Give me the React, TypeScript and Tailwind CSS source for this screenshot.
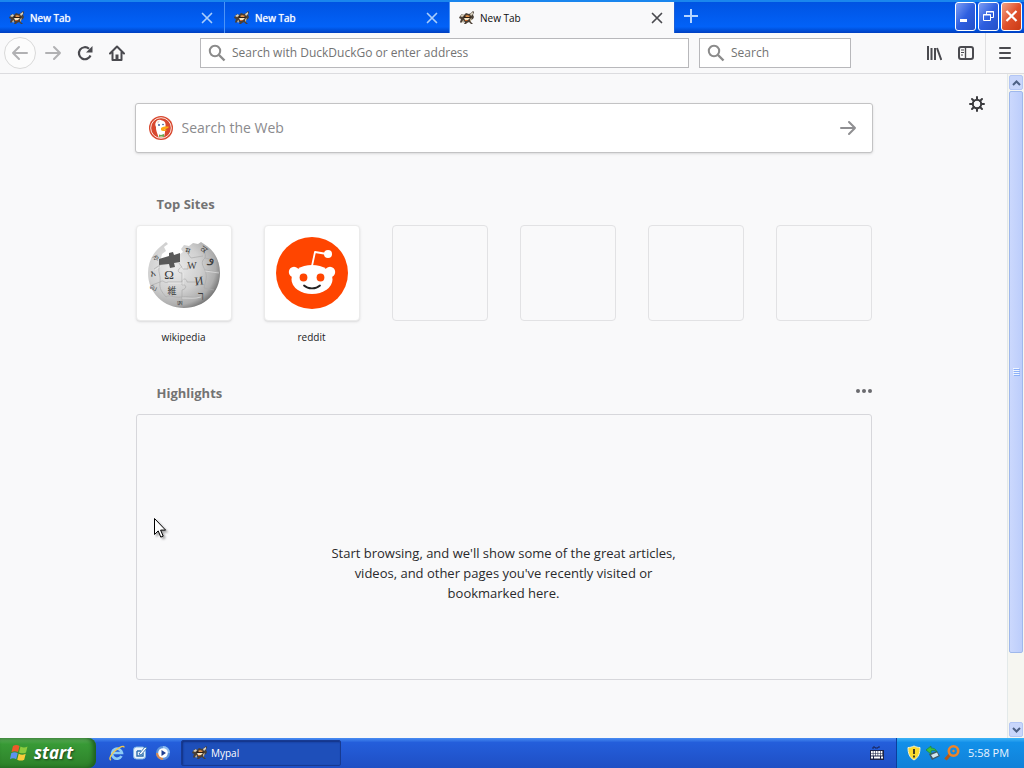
import { useState } from 'react';
import type { ReactNode } from 'react';

const MypalIcon = () => (
    <svg width="16" height="16" viewBox="0 0 16 16" className="shrink-0" aria-hidden="true">
        <path d="M1 6l2-2 2 1 2-2 3 1 2-1 2-2 1 1-1 3 1 2-1 2-2 1 0 2 2 2h-2l-2-2-2 1-1 1-2 0 1-2-2-1-2 2-1-1 1-3-2-1z" fill="#4a3f35" />
        <path d="M1 6l3-2 1 2-2 1zM11 4l3-2 0 2-2 2z" fill="#d9d2c0" />
        <path d="M11 9l2-1-1 3-1 1zM3 11l2-1 0 2-1 1z" fill="#b9ad94" />
        <path d="M4 7l4-2 4 2-2 2-4 0z" fill="#2a1c12" />
        <path d="M6 6l2-1 3 1-1 1-3 0z" fill="#e0914c" />
        <path d="M5 8h6l-2 2H6z" fill="#f5e7c8" />
        <path d="M6 10h3l-1 1H6z" fill="#c9682c" />
    </svg>
);

const CloseIcon = () => (
    <svg width="12" height="12" viewBox="0 0 12 12" fill="none" stroke="currentColor" strokeWidth="1.7" strokeLinecap="round" aria-hidden="true">
        <path d="M1.500 1.500l9 9M10.500 1.500l-9 9" />
    </svg>
);

const SearchIcon = () => (
    <svg width="18" height="18" viewBox="0 0 18 18" fill="none" stroke="#8b8b8b" className="shrink-0" aria-hidden="true">
        <circle cx="7" cy="7" r="5.2" strokeWidth="2" />
        <path d="M11 11l5.5 5.5" strokeWidth="2.4" />
    </svg>
);

const ArrowIcon = ({ flip = false }: { flip?: boolean }) => (
    <svg width="18" height="18" viewBox="0 0 18 18" fill="none" stroke="currentColor" strokeWidth="2" strokeLinecap="round" strokeLinejoin="round" className={flip ? 'rotate-180' : ''} aria-hidden="true">
        <path d="M2 9h14M10 3l6 6-6 6" />
    </svg>
);

const DuckIcon = () => (
    <svg width="24" height="24" viewBox="0 0 24 24" aria-hidden="true">
        <circle cx="12" cy="12" r="12" fill="#d8482f" />
        <circle cx="12" cy="12" r="10.3" fill="none" stroke="#fbe3dc" strokeWidth="1" />
        <path d="M7 6c1-2 4-3 6-1.500 3 .5 4 3 3.500 6l-.5 6-1 4.500c-2 .8-4 .6-5.500 0C8 17 6.500 13 7 11c-1-1.500-1-3.500 0-5z" fill="#fff" />
        <path d="M8 6c1-1 2-1.500 3-1.500L9 8z" fill="#e9dccf" />
        <circle cx="10" cy="9" r=".9" fill="#2d4f8e" />
        <circle cx="14" cy="8.500" r=".8" fill="#2d4f8e" />
        <path d="M12 12c2-1.500 5-1.500 8-1.300-.5 1.500-3 2.300-5 2.600l3 .6c-1.500 1.400-5 1.200-6 0z" fill="#fda913" />
        <path d="M10 18.500l2 .5 3-1v3l-3-.5-2 .5z" fill="#6aa84c" />
    </svg>
);

const WikipediaLogo = () => (
    <svg width="72" height="72" viewBox="0 0 72 72" aria-hidden="true">
        <defs>
            <radialGradient id="globe" cx="36%" cy="38%" r="68%">
                <stop offset="0" stopColor="#ececec" />
                <stop offset="0.55" stopColor="#d0d0d0" />
                <stop offset="0.85" stopColor="#adadad" />
                <stop offset="1" stopColor="#757575" />
            </radialGradient>
        </defs>
        <path d="M18 5l-6 5C4 17 0 26 0 36c0 20 16 35 36 35s36-15 36-35c0-13-6-23-16-29l-3-2-3 2-5-1-4 3-5-1-3 4 2 3-4 3-1 5-18 2 2-8 4-3-2-4 4-3z" fill="url(#globe)" />
        <path d="M11 22l10-3 0-3 4-1 1 3 6-2 0 9-6 1 1 4-5 1-1-4-10 1z" fill="#5a5a5a" />
        <path d="M12 28l-6 4M31 26l4 6h5v-4M12 45c4-3 4 2 8 0h14c0-4 5-4 5 0h12M34 30c-5 2-5 6 0 6v12c5-1 5 4 0 5v15M56 8c-3 6 3 7 1 13l13 3M57 21c-5 4-2 8 0 12l14 2M57 33c3 8 0 12-1 18l10 2M12 28c-3 6 1 10 0 17s2 10 6 15M18 60c4-3 6 1 16 0s12 2 20-1M38 14l5 7 12-2M4 48l8-3" fill="none" stroke="#aaa" strokeWidth="0.7" />
        <path d="M13 29l-6 4M32 31h4M20 46h14M35 36v12M57 34l14 2M34 61c8 0 12 1 19-1" fill="none" stroke="#f4f4f4" strokeWidth="0.5" />
        <g fill="#3a3a3a" textAnchor="middle" className="font-['Liberation_Serif',serif]">
            <text x="21" y="42" fontSize="13">Ω</text>
            <text x="44" y="32" fontSize="10">W</text>
            <text x="51" y="48" fontSize="12" transform="rotate(-8 51 44)">И</text>
            <text x="24" y="57" fontSize="9" className="font-['Noto_Sans_CJK_JP',sans-serif]">維</text>
            <text x="53" y="63" fontSize="12">ר</text>
            <text x="64" y="26" fontSize="13" transform="rotate(12 64 22)">و</text>
            <text x="57" y="15" fontSize="9" transform="rotate(35 57 11)">ਕ</text>
            <text x="40" y="16" fontSize="8" transform="rotate(10 40 13)">म</text>
            <text x="5" y="39" fontSize="9" transform="rotate(-15 5 36)">እ</text>
            <text x="6" y="53" fontSize="8" transform="rotate(25 6 50)">வ</text>
            <text x="8" y="24" fontSize="8" transform="rotate(-30 8 20)">ক</text>
            <text x="32" y="69" fontSize="7">ཨ</text>
        </g>
    </svg>
);

const RedditLogo = () => (
    <svg width="72" height="72" viewBox="0 0 72 72" aria-hidden="true">
        <circle cx="36" cy="36" r="36" fill="#ff4500" />
        <path d="M36 29l3-14 12 2" fill="none" stroke="#fff" strokeWidth="1.8" strokeLinejoin="round" />
        <circle cx="52" cy="17" r="4" fill="#fff" />
        <circle cx="18" cy="35" r="5.2" fill="#fff" />
        <circle cx="54" cy="35" r="5.2" fill="#fff" />
        <ellipse cx="36" cy="42.5" rx="20.5" ry="14.5" fill="#fff" />
        <circle cx="27.5" cy="40.5" r="3.9" fill="#ff4500" />
        <circle cx="44.5" cy="40.5" r="3.9" fill="#ff4500" />
        <path d="M28 48.500c4 3.800 12 3.800 16 0" fill="none" stroke="#222" strokeWidth="1.8" strokeLinecap="round" />
    </svg>
);

const Tab = ({ active, onSelect, onClose }: { active: boolean; onSelect: () => void; onClose: () => void }) => (
    <div
        className={`flex w-[225px] items-center pl-[9px] pr-[11px] border-r ${
            active ? 'bg-[#f9f9fa] text-[#0c0c0d] border-[#1a5fd8]' : 'text-white border-[#4d94f7]'
        }`}
    >
        <button onClick={onSelect} className="flex flex-1 items-center gap-[5px] text-left text-[10px] leading-4">
            <MypalIcon />
            <span className={active ? '' : 'text-shadow-[0_0_1px_#ffffff]'}>New Tab</span>
        </button>
        <button onClick={onClose} aria-label="Close tab" className={active ? 'text-[#4a4a4f]' : 'text-[#a9cdfb]'}>
            <CloseIcon />
        </button>
    </div>
);

const ToolButton = ({ label, round = false, faded = false, children }: { label: string; round?: boolean; faded?: boolean; children: ReactNode }) => (
    <button
        aria-label={label}
        className={`flex size-8 shrink-0 items-center justify-center ${round ? 'rounded-full border border-[#d9d9d9] bg-[#fcfcfc]' : ''} ${faded ? 'text-[#b1b1b3]' : 'text-[#4a4a4f]'}`}
    >
        {children}
    </button>
);

const sites = [
    { name: 'wikipedia', logo: <WikipediaLogo /> },
    { name: 'reddit', logo: <RedditLogo /> },
];

const App = () => {
    const [tabs, setTabs] = useState([1, 2, 3]);
    const [current, setCurrent] = useState(3);

    const addTab = () => {
        const id = Math.max(0, ...tabs) + 1;
        setTabs([...tabs, id]);
        setCurrent(id);
    };

    return (
        <div className="flex h-screen flex-col overflow-hidden bg-[#f9f9fa] font-['Open_Sans','Noto_Sans',sans-serif]">
            {/* Title bar and tabs */}
            <header className="flex h-[33px] shrink-0 border-t-2 border-[#1a86ee] bg-linear-to-b from-[#0053e2] via-[#0262f8] via-80% to-[#003fc0]">
                {tabs.map((id) => (
                    <Tab
                        key={id}
                        active={id === current}
                        onSelect={() => setCurrent(id)}
                        onClose={() => setTabs(tabs.filter((t) => t !== id))}
                    />
                ))}
                <button onClick={addTab} aria-label="New tab" className="flex w-8 items-center justify-center pb-1 text-[#b5d4ff]">
                    <svg width="14" height="14" viewBox="0 0 14 14" stroke="currentColor" strokeWidth="2" aria-hidden="true">
                        <path d="M7 0v14M0 7h14" />
                    </svg>
                </button>
                <div className="ml-auto flex gap-[2px] pb-[2px] pr-[2px]">
                    <button aria-label="Minimize" className="w-[21px] rounded-[3px] border border-white bg-linear-to-br from-[#7d9cf3] via-[#2e5fe0] to-[#2450c8]">
                        <svg width="19" height="26" viewBox="0 0 19 26" aria-hidden="true">
                            <path d="M4 15h7v3H4z" fill="#fff" />
                        </svg>
                    </button>
                    <button aria-label="Restore" className="w-[21px] rounded-[3px] border border-white bg-linear-to-br from-[#7d9cf3] via-[#2e5fe0] to-[#2450c8]">
                        <svg width="19" height="26" viewBox="0 0 19 26" fill="none" stroke="#fff" aria-hidden="true">
                            <path d="M7.500 11V7.500h7v6H12M7 8h8M4.500 10.500h7v6h-7zM4 11h8" />
                        </svg>
                    </button>
                    <button aria-label="Close" className="w-[21px] rounded-[3px] border border-white bg-linear-to-br from-[#f0a184] via-[#e0512c] to-[#c93a14]">
                        <svg width="19" height="26" viewBox="0 0 19 26" stroke="#fff" strokeWidth="2.2" aria-hidden="true">
                            <path d="M4.500 7l10 10M14.500 7l-10 10" />
                        </svg>
                    </button>
                </div>
            </header>

            {/* Navigation toolbar */}
            <nav className="flex h-[41px] shrink-0 items-center border-b border-[#dcdcdf] pl-1 pr-[3px]">
                <ToolButton label="Back" round faded>
                    <ArrowIcon flip />
                </ToolButton>
                <div className="ml-px flex">
                    <ToolButton label="Forward" faded>
                        <ArrowIcon />
                    </ToolButton>
                    <ToolButton label="Reload">
                        <svg width="16" height="16" viewBox="0 0 16 16" fill="none" stroke="currentColor" strokeWidth="2.2" aria-hidden="true">
                            <path d="M13.500 10.500A6 6 0 1 1 12 3.800" />
                            <path d="M15.500 1v6.500H9z" fill="currentColor" stroke="none" />
                        </svg>
                    </ToolButton>
                    <ToolButton label="Home">
                        <svg width="16" height="16" viewBox="0 0 16 16" fill="none" stroke="currentColor" strokeWidth="2" strokeLinecap="round" strokeLinejoin="round" aria-hidden="true">
                            <path d="M1 8.500l7-7 7 7M3.500 7.500V15h9V7.500" />
                            <path d="M6.500 9.500h3V15h-3z" fill="currentColor" stroke="none" />
                        </svg>
                    </ToolButton>
                </div>
                <label className="ml-[67px] flex h-[30px] flex-1 items-center gap-[6px] border border-[#b8b8bb] bg-white pl-[7px]">
                    <SearchIcon />
                    <input aria-label="Address" placeholder="Search with DuckDuckGo or enter address" className="min-w-0 flex-1 text-xs outline-none placeholder:text-[#737373]" />
                </label>
                <label className="ml-[10px] mr-[67px] flex h-[30px] w-[152px] items-center gap-[6px] border border-[#b8b8bb] bg-white pl-[7px]">
                    <SearchIcon />
                    <input aria-label="Search" placeholder="Search" className="min-w-0 flex-1 text-xs outline-none placeholder:text-[#737373]" />
                </label>
                <ToolButton label="Library">
                    <svg width="16" height="16" viewBox="0 0 16 16" fill="none" stroke="currentColor" strokeWidth="2" aria-hidden="true">
                        <path d="M2 1v14M5.500 3v12M9 3v12M11 3l4.300 12" />
                    </svg>
                </ToolButton>
                <ToolButton label="Sidebars">
                    <svg width="16" height="16" viewBox="0 0 16 16" fill="none" stroke="currentColor" aria-hidden="true">
                        <rect x="1" y="2" width="14" height="12" rx="2" strokeWidth="2" />
                        <path d="M7.500 2v12" strokeWidth="1.4" />
                        <path d="M3 5h3M3 7.500h3M3 10h2" strokeWidth="1" />
                    </svg>
                </ToolButton>
                <div className="ml-[3px] mr-[3px] h-full w-px bg-[#e0e0e2]" />
                <ToolButton label="Menu">
                    <svg width="12" height="12" viewBox="0 0 12 12" stroke="currentColor" strokeWidth="2" strokeLinecap="round" aria-hidden="true">
                        <path d="M1 1h10M1 6h10M1 11h10" />
                    </svg>
                </ToolButton>
            </nav>

            <div className="flex min-h-0 flex-1">
                {/* New tab page */}
                <main className="relative flex-1 overflow-hidden px-8 pt-[29px]">
                    <button aria-label="Customize" className="absolute right-[22px] top-[22px] text-[#3b3b3e]">
                        <svg width="16" height="16" viewBox="0 0 16 16" fill="none" stroke="currentColor" strokeWidth="2" strokeLinecap="round" aria-hidden="true">
                            <circle cx="8" cy="8" r="4.2" />
                            <path d="M8 1v2.500M8 12.500V15M1 8h2.500M12.500 8H15M3 3l2 2M11 11l2 2M3 13l2-2M11 5l2-2" />
                        </svg>
                    </button>
                    <div className="mx-auto max-w-[736px]">
                        <form onSubmit={(e) => e.preventDefault()} className="-mx-px flex h-[50px] items-center rounded-[3px] border border-[#c3c3c4] bg-white pl-[13px] pr-[15px] shadow-sm">
                            <DuckIcon />
                            <input aria-label="Search the Web" placeholder="Search the Web" className="ml-[9px] min-w-0 flex-1 text-sm outline-none placeholder:text-[#8a8a8d]" />
                            <button aria-label="Search" className="text-[#8f8f92]">
                                <ArrowIcon />
                            </button>
                        </form>

                        <section>
                            <h2 className="mt-[41px] pl-[21px] text-[13px] font-bold leading-5 text-[#737373]">Top Sites</h2>
                            <ul className="mt-[11px] grid grid-cols-6 gap-8 text-[#1c1c1e]">
                                {sites.map((site) => (
                                    <li key={site.name}>
                                        <a href="#" className="block text-center text-[10px] leading-4">
                                            <span className="flex aspect-square items-center justify-center rounded-[4px] border border-[#ebebeb] bg-white shadow-sm">
                                                {site.logo}
                                            </span>
                                            <span className="mt-2 block">{site.name}</span>
                                        </a>
                                    </li>
                                ))}
                                {[3, 4, 5, 6].map((n) => (
                                    <li key={n} className="aspect-square self-start rounded-[4px] border border-[#e2e2e4]" />
                                ))}
                            </ul>
                        </section>

                        <section>
                            <div className="mt-[38px] flex items-center justify-between pl-[21px]">
                                <h2 className="text-[13px] font-bold leading-5 text-[#737373]">Highlights</h2>
                                <button aria-label="Section options" className="pb-1">
                                    <svg width="16" height="4" viewBox="0 0 16 4" fill="#6b6b6e" aria-hidden="true">
                                        <circle cx="2" cy="2" r="2" />
                                        <circle cx="8" cy="2" r="2" />
                                        <circle cx="14" cy="2" r="2" />
                                    </svg>
                                </button>
                            </div>
                            <div className="mt-[11px] min-h-[266px] rounded-[3px] border border-[#d7d7db] pt-32">
                                <p className="mx-auto max-w-[350px] text-center text-[13px] leading-5 text-[#2a2a2c]">
                                    Start browsing, and we'll show some of the great articles, videos, and other pages you've recently visited or bookmarked here.
                                </p>
                            </div>
                        </section>
                    </div>
                    {/* Mouse pointer */}
                    <svg width="16" height="24" viewBox="0 0 16 24" className="absolute left-[153px] top-[443px] drop-shadow-[2px_2px_1px_#00000055]" aria-hidden="true">
                        <path d="M1.500 1.500v16l3.700-3.600 2.600 6.200 2.400-1-2.600-6h5z" fill="#fff" stroke="#000" />
                    </svg>
                </main>

                {/* Scrollbar */}
                <div className="flex w-[17px] flex-col border-l border-[#e3e9e9] bg-[#f6f6f1]">
                    <button aria-label="Scroll up" className="m-px flex h-[15px] items-center justify-center rounded-[2px] border border-[#b3c6f4] bg-[#c8d6fb]">
                        <svg width="9" height="6" viewBox="0 0 9 6" fill="none" stroke="#4d6185" strokeWidth="2" aria-hidden="true">
                            <path d="M1 5l3.500-3.500L8 5" />
                        </svg>
                    </button>
                    <div className="mx-px flex flex-[560] items-center justify-center rounded-[2px] border border-[#9fb8ec] bg-linear-to-r from-[#cbd8fd] to-[#bccdfb]">
                        <svg width="7" height="8" viewBox="0 0 7 8" stroke="#eef4fe" aria-hidden="true">
                            <path d="M0 .5h6M0 2.500h6M0 4.500h6M0 6.500h6" />
                            <path d="M1 1.500h6M1 3.500h6M1 5.500h6M1 7.500h6" stroke="#8cb0f8" />
                        </svg>
                    </div>
                    <div className="flex-[68]" />
                    <button aria-label="Scroll down" className="m-px flex h-[15px] items-center justify-center rounded-[2px] border border-[#b3c6f4] bg-[#c8d6fb]">
                        <svg width="9" height="6" viewBox="0 0 9 6" fill="none" stroke="#4d6185" strokeWidth="2" aria-hidden="true">
                            <path d="M1 1l3.500 3.500L8 1" />
                        </svg>
                    </button>
                </div>
            </div>

            {/* Taskbar */}
            <footer className="flex h-[30px] shrink-0 bg-linear-to-b from-[#4a8df2] via-[#245edb] via-15% to-[#1f4fc4] text-[10px] text-white">
                <button className="flex w-24 items-center gap-1 rounded-r-[8px] bg-linear-to-b from-[#5fae5c] via-[#389a36] via-20% to-[#2d8029] pl-[10px] text-[17px] font-bold italic leading-6 shadow-[inset_-3px_0_4px_#1e5e1e] text-shadow-[1px_1px_2px_#1c401c]">
                    <svg width="20" height="20" viewBox="0 0 20 20" aria-hidden="true">
                        <path d="M3 3c2.500-1.500 4.500-1 6.500 0L8 9c-2-1-4-1.300-6.500 0z" fill="#ee5a2a" />
                        <path d="M10.500 3.500c2.500 1.300 4.500 1.300 7 0L16 9.500c-2.500 1.300-4.500 1-7 0z" fill="#8ccb3e" />
                        <path d="M1.200 10.200c2.500-1.300 4.500-1 6.500 0l-1.500 6c-2-1-4-1.300-6.200 0z" fill="#5c92f0" />
                        <path d="M8.700 10.700c2.500 1.300 4.500 1.300 7 0l-1.500 6c-2.500 1.300-4.500 1-7 0z" fill="#fbcb3b" />
                    </svg>
                    start
                </button>
                <div className="flex items-center gap-[7px] pl-[13px]">
                    <button aria-label="Internet Explorer">
                        <svg width="16" height="16" viewBox="0 0 16 16" fill="none" aria-hidden="true">
                            <path d="M12.500 11A5 5 0 1 1 13 8H4" stroke="#8ccbf7" strokeWidth="2.6" />
                            <path d="M2 15c-3-1 1-7 5-10s8-5 8-2.500" stroke="#f1c84b" strokeWidth="1.4" />
                        </svg>
                    </button>
                    <button aria-label="Show desktop">
                        <svg width="16" height="16" viewBox="0 0 16 16" fill="none" aria-hidden="true">
                            <rect x="1.500" y="2" width="12" height="12" rx="3" fill="#e9f3fb" stroke="#7fb5e6" />
                            <path d="M5 6h4M5 6v5h6V8" stroke="#2d6fae" strokeWidth="1.4" />
                            <path d="M7 9l6-7 2 1-6 7z" fill="#fff" stroke="#3c78b4" />
                        </svg>
                    </button>
                    <button aria-label="Media player">
                        <svg width="16" height="16" viewBox="0 0 16 16" aria-hidden="true">
                            <circle cx="8" cy="8" r="7" fill="#5f95dc" />
                            <path d="M8 1a7 7 0 0 1 7 7H8z" fill="#90bdf0" />
                            <path d="M8 15a7 7 0 0 1-7-7h7z" fill="#d58a52" />
                            <circle cx="8" cy="8" r="4.8" fill="#fff" />
                            <path d="M6.500 5l4.500 3-4.500 3z" fill="#1d3e93" />
                        </svg>
                    </button>
                </div>
                <button className="my-[2px] ml-[10px] flex w-40 items-center gap-[3px] rounded-[2px] border border-[#173a91] bg-[#1e4fba] pl-[10px] shadow-[inset_1px_1px_2px_#123080]">
                    <MypalIcon />
                    Mypal
                </button>
                <button aria-label="Keyboard" className="ml-auto mr-[12px]">
                    <svg width="14" height="14" viewBox="0 0 14 14" aria-hidden="true">
                        <path d="M3 3V1h2v1h3V1h2" fill="none" stroke="#1a2557" />
                        <path d="M0 4h14v10H0z" fill="#1b2348" />
                        <path d="M1 6h12M1 8.500h12" stroke="#fff" strokeWidth="1.8" strokeDasharray="1.8 .6" />
                        <path d="M1 11.500h2M4 11.500h6M11 11.500h2" stroke="#fff" strokeWidth="2" />
                    </svg>
                </button>
                <div className="flex w-32 items-center gap-[3px] border-l border-[#0b3f9c] bg-linear-to-b from-[#3cb4f6] via-[#1290e9] via-15% to-[#1181d8] pl-[9px]">
                    <svg width="16" height="16" viewBox="0 0 16 16" aria-hidden="true">
                        <path d="M8 1c2 1 4 1.500 6 1.500 0 6-1.500 10-6 12.500C3.500 12.500 2 8.500 2 2.500 4 2.500 6 2 8 1z" fill="#fadb2e" stroke="#f5f1cf" />
                        <path d="M8 4v5M8 10.500v2" stroke="#222" strokeWidth="1.7" />
                    </svg>
                    <svg width="16" height="16" viewBox="0 0 16 16" aria-hidden="true">
                        <path d="M4 9l8-3 3 5-8 4z" fill="#3f5a68" />
                        <path d="M6 10l6-2.500 1.500 3L8 13z" fill="#d3e8ef" />
                        <path d="M1 5l5-4 0 2c3 0 5 1 6 4-2-2-4-2-6-1v3z" fill="#3ebf3e" stroke="#1e7c30" strokeWidth=".6" />
                    </svg>
                    <svg width="16" height="16" viewBox="0 0 16 16" fill="none" aria-hidden="true">
                        <path d="M1.500 14.500L6 9.500" stroke="#b45718" strokeWidth="3.2" />
                        <circle cx="9.500" cy="6" r="4.7" stroke="#ee8428" strokeWidth="2.6" />
                        <circle cx="9.500" cy="6" r="1.2" fill="#ee8428" />
                    </svg>
                    <time className="ml-[5px] text-[11px] text-[#eaf4ff]">5:58 PM</time>
                </div>
            </footer>
        </div>
    );
};

export default App;
